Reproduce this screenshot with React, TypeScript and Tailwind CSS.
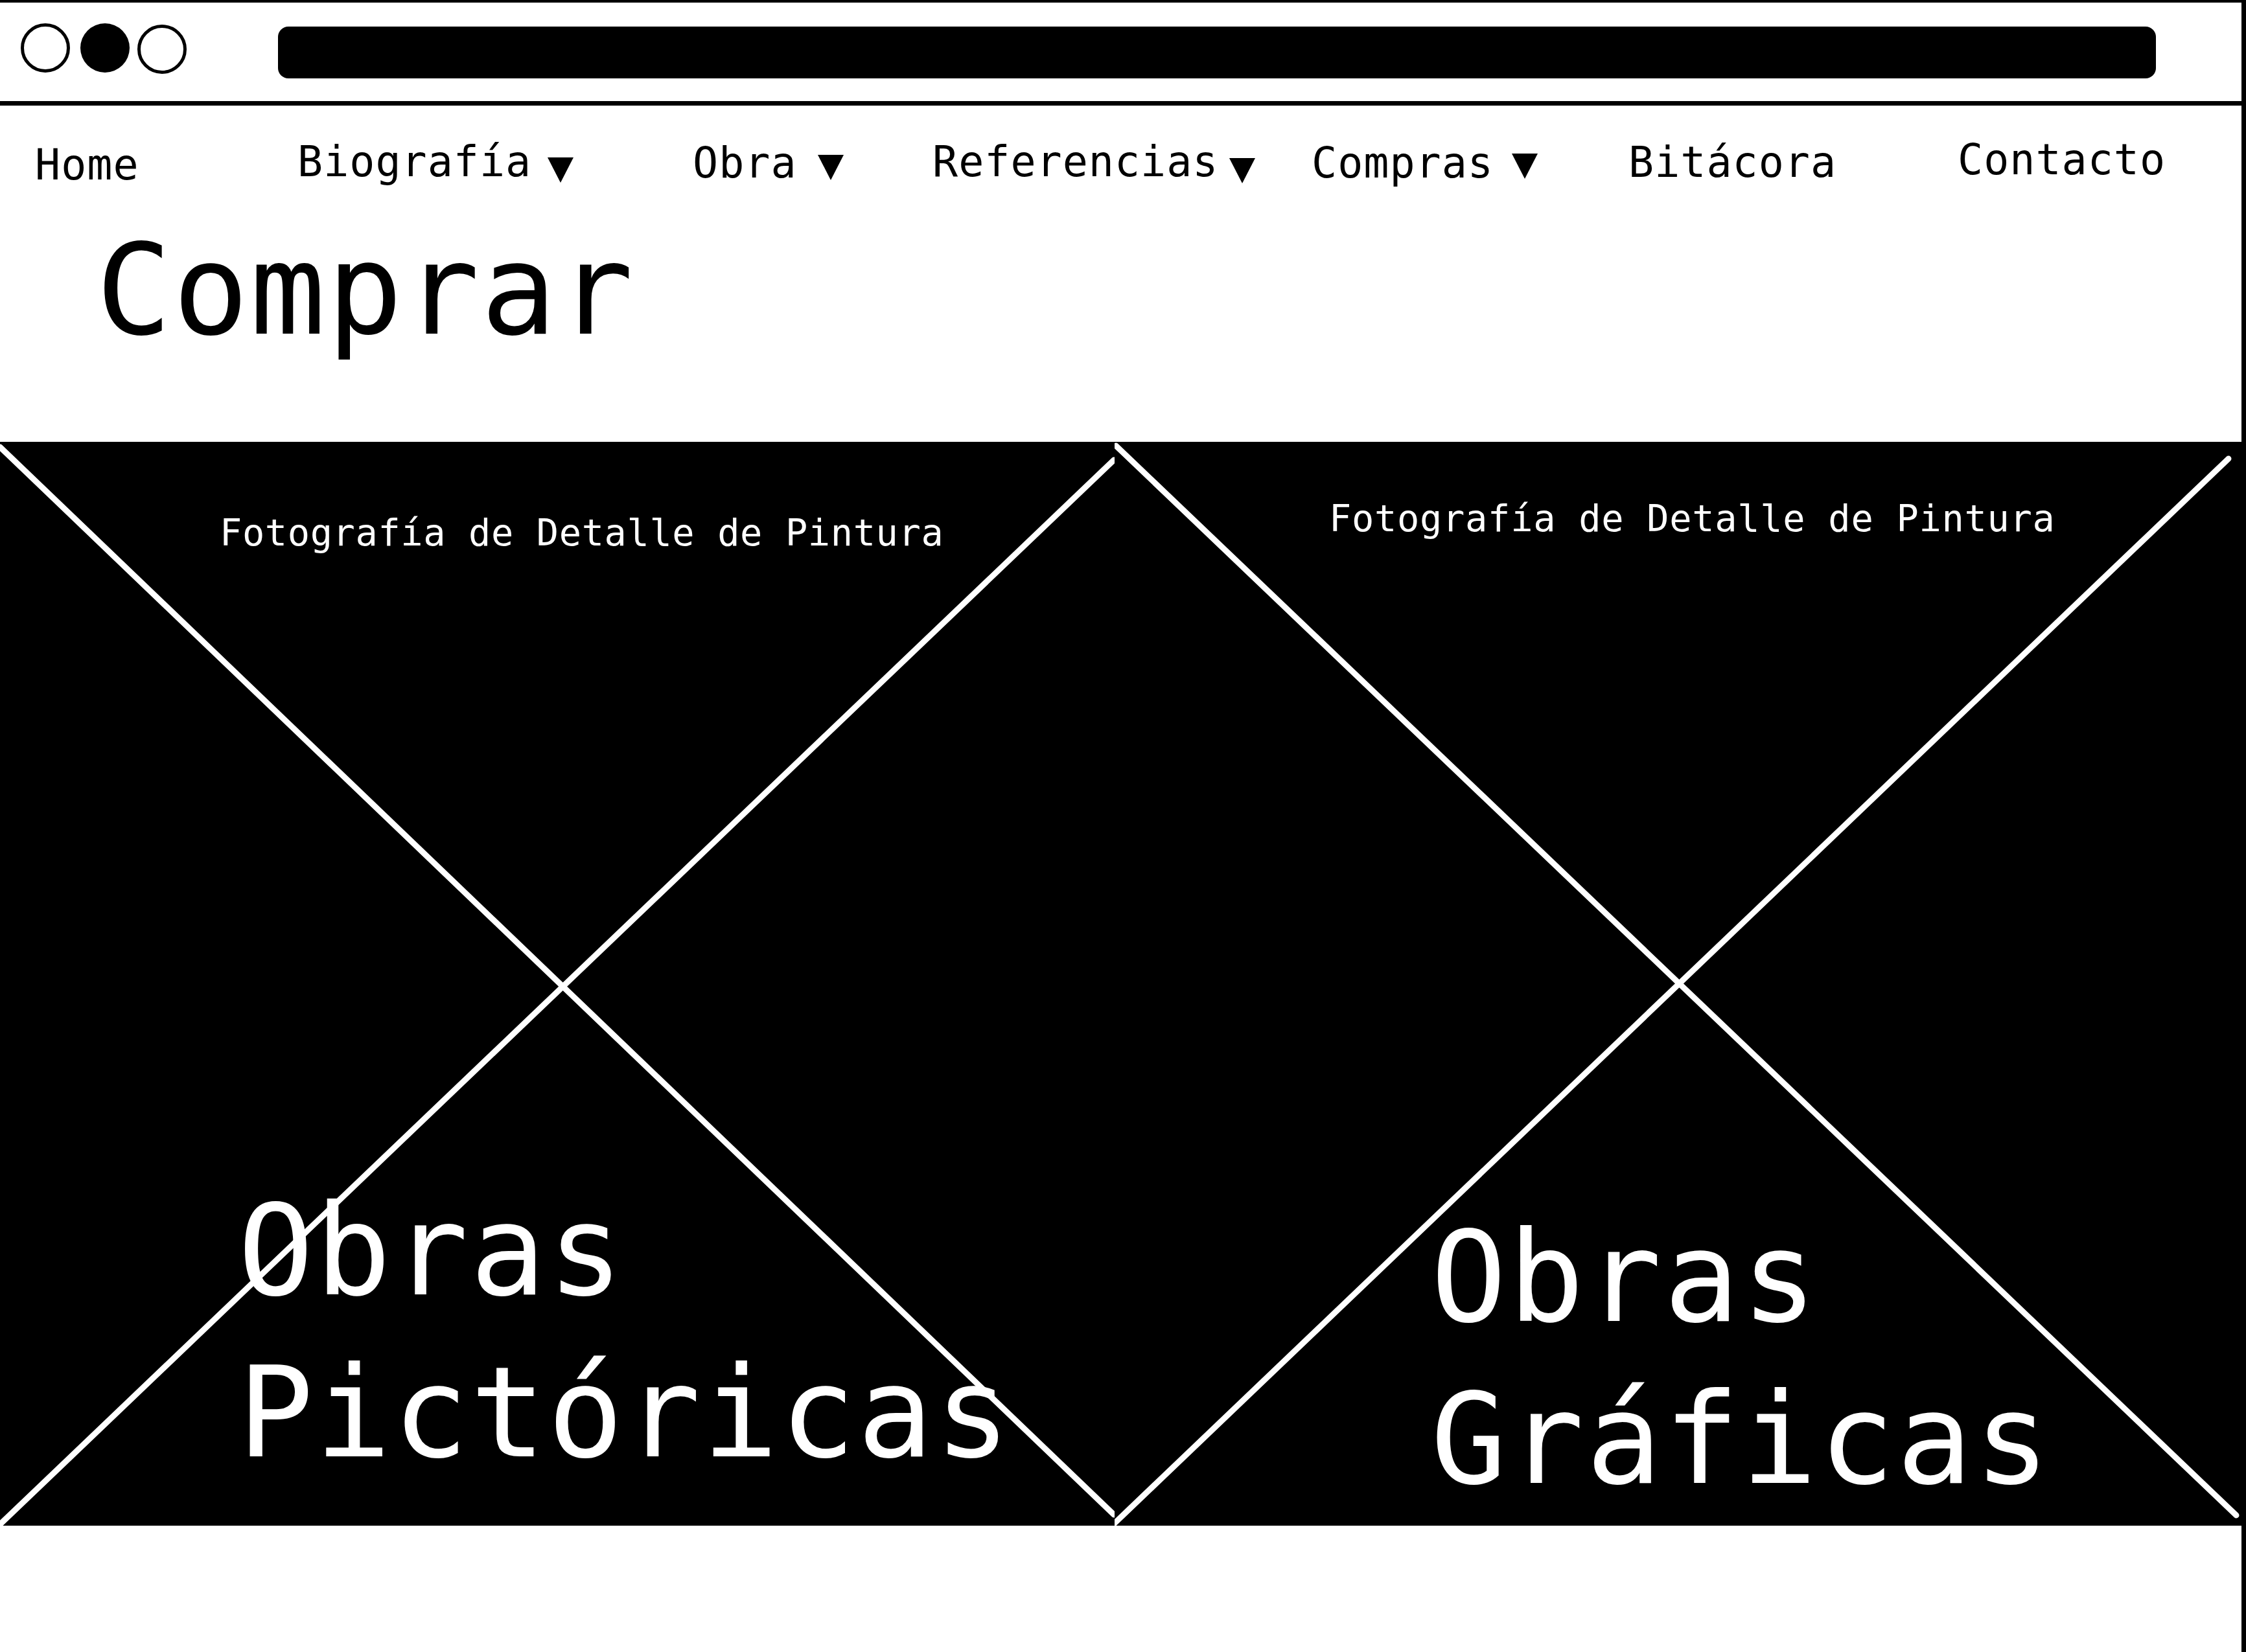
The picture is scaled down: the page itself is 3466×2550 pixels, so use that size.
import React from "react";

// small down-pointing triangle used next to the dropdown nav entries
function Caret({ className }: { className: string }) {
    return (
        <svg className={className} width="40" height="39" viewBox="0 0 40 39">
            <polygon points="0,0 40,0 20,39" fill="black" />
        </svg>
    );
}

// image placeholder: black box with a white cross drawn corner to corner
function Cross({ lines }: { lines: number[][] }) {
    return (
        <svg
            className="absolute inset-0"
            width="100%"
            height="100%"
        >
            {lines.map((l, i) => (
                <line
                    key={i}
                    x1={l[0]}
                    y1={l[1]}
                    x2={l[2]}
                    y2={l[3]}
                    stroke="white"
                    strokeWidth="9"
                    strokeLinecap="round"
                />
            ))}
        </svg>
    );
}

export default function App() {
    return (
        <div className="w-[3466px] h-[2550px] bg-white border-r-[7px] border-black overflow-hidden font-['DejaVu_Sans_Mono',monospace] text-black">
            {/* Browser chrome */}
            <div className="h-[163px] border-t-4 border-b-[7px] border-black flex items-start">
                <div className="ml-[32px] mt-[32px] w-[76px] h-[76px] rounded-full border-[5px] border-black" />
                <div className="ml-[16px] mt-[32px] w-[76px] h-[76px] rounded-full bg-black" />
                <div className="ml-[12px] mt-[34px] w-[76px] h-[76px] rounded-full border-[5px] border-black" />
                <div className="ml-[141px] mt-[37px] w-[2898px] h-[80px] rounded-[16px] bg-black" />
            </div>

            <div className="h-[519px]">
                {/* Navigation */}
                <nav className="flex h-[130px] pl-[54px] text-[65px] leading-[76px] tracking-[1px] whitespace-nowrap">
                    <div className="w-[405px] pt-[54px]">
                        <span>Home</span>
                    </div>
                    <div className="w-[610px] pt-[49px] flex items-start">
                        <span>Biografía</span>
                        <Caret className="ml-[25px] mt-[31px]" />
                    </div>
                    <div className="w-[370px] pt-[51px] flex items-start">
                        <span>Obra</span>
                        <Caret className="ml-[32px] mt-[25px]" />
                    </div>
                    <div className="w-[585px] pt-[49px] flex items-start">
                        <span>Referencias</span>
                        <Caret className="ml-[17px] mt-[32px]" />
                    </div>
                    <div className="w-[489px] pt-[51px] flex items-start">
                        <span>Compras</span>
                        <Caret className="ml-[28px] mt-[23px]" />
                    </div>
                    <div className="w-[508px] pt-[50px]">
                        <span>Bitácora</span>
                    </div>
                    <div className="pt-[46px]">
                        <span>Contacto</span>
                    </div>
                </nav>

                <h1 className="mt-[58px] pl-[148px] text-[194px] leading-[194px] tracking-[2px] font-normal">Comprar</h1>
            </div>

            {/* Purchase categories */}
            <div className="flex">
                <div className="relative w-[1720px] h-[1673px] bg-black text-white">
                    <Cross lines={[[0, 8, 1719, 1656], [1719, 28, 0, 1671]]} />
                    <div className="relative flex flex-col">
                        <p className="pt-[107px] pl-[339px] text-[57px] leading-[66px] tracking-[0.6px]">
                            Fotografía de Detalle de Pintura
                        </p>
                        <p className="mt-[951px] pl-[367px] text-[194px] leading-[250px] tracking-[2.7px]">
                            Obras<br />Pictóricas
                        </p>
                    </div>
                </div>
                <div className="relative w-[1739px] h-[1673px] bg-black text-white">
                    <Cross lines={[[2, 6, 1731, 1657], [1719, 26, -4, 1673]]} />
                    <div className="relative flex flex-col">
                        <p className="pt-[85px] pl-[331px] text-[57px] leading-[66px] tracking-[0.7px]">
                            Fotografía de Detalle de Pintura
                        </p>
                        <p className="mt-[1014px] pl-[488px] text-[194px] leading-[250px] tracking-[3px]">
                            Obras<br />Gráficas
                        </p>
                    </div>
                </div>
            </div>
        </div>
    );
}
